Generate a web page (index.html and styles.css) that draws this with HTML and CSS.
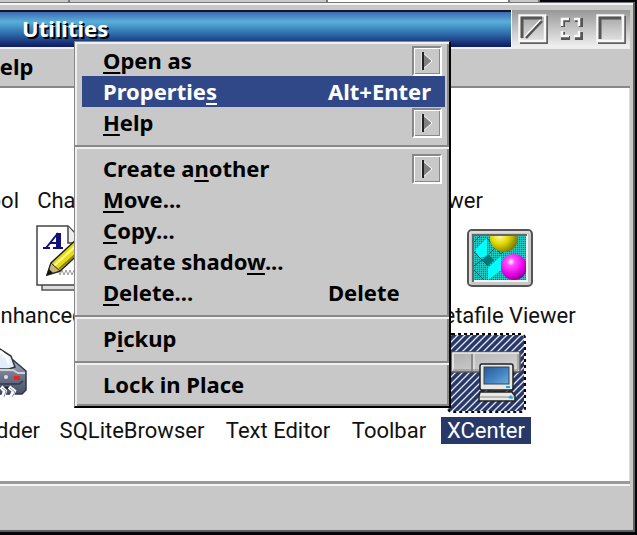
FILE: index.html
```html
<!DOCTYPE html>
<html lang="en">
<head>
    <meta charset="UTF-8">
    <meta name="viewport" content="width=device-width, initial-scale=1.0">
    <title>Utilities</title>
    <link rel="stylesheet" href="styles.css">
</head>
<body>
    <div class="desktop">
        <!-- Bottom edge of the window behind -->
        <div class="back-window">
            <span class="back-cell"></span>
            <span class="back-cell back-wide"></span>
            <span class="back-cell back-white"></span>
            <span class="back-cell back-end"></span>
        </div>

        <div class="window">
            <div class="titlebar">
                <h1 class="title">Utilities</h1>
                <div class="title-buttons">
                    <button type="button" aria-label="Close">
                        <svg width="30" height="30" viewBox="0 0 30 30" fill="none">
                            <path d="M2 29H29V2" stroke="#606060" stroke-width="2"/>
                            <path d="M1.5 1.5H27V27H1.5Z" stroke="#f8f8f8" stroke-width="2.5"/>
                            <path d="M4 24V4H24" stroke="#555" stroke-width="3"/>
                            <path d="M7 23L23 6" stroke="#fff" stroke-width="2.5"/>
                            <path d="M8 24L24 7" stroke="#505050" stroke-width="2.5"/>
                        </svg>
                    </button>
                    <button type="button" aria-label="Minimize">
                        <svg width="24" height="24" viewBox="0 0 24 24" fill="none">
                            <path d="M3 10V3H10M15 3H21V10M3 15V21H10M15 21H21V15" stroke="#555" stroke-width="4"/>
                            <path d="M2 9V2H9M14 2H19V9M2 14V19H9M14 19H19V14" stroke="#f8f8f8" stroke-width="2.5"/>
                        </svg>
                    </button>
                    <button type="button" aria-label="Maximize">
                        <svg width="30" height="30" viewBox="0 0 30 30" fill="none">
                            <path d="M2 29H29V2" stroke="#606060" stroke-width="2"/>
                            <path d="M1.5 1.5H27V27H1.5Z" stroke="#f8f8f8" stroke-width="2.5"/>
                            <path d="M4 25V4H25" stroke="#555" stroke-width="3"/>
                        </svg>
                    </button>
                </div>
            </div>

            <div class="menubar">
                <button type="button"><u>H</u>elp</button>
            </div>

            <div class="folder">
                <div class="icon-row row-tools">
                    <a href="#" class="item"><span class="label">Tool</span></a>
                    <a href="#" class="item"><span class="label">Char</span></a>
                    <a href="#" class="item"><span class="label">Viewer</span></a>
                </div>
                <div class="icon-row row-editors">
                    <a href="#" class="item">
                        <span class="icon">
                            <svg width="64" height="66" viewBox="0 0 64 66">
                                <path d="M6 8H51V65H6Z" fill="#ddd" stroke="#555" stroke-width="1.5"/>
                                <path d="M1 1H32L46 15V60H1Z" fill="#fff" stroke="#444" stroke-width="1.5"/>
                                <path d="M32 1V18H46" fill="#eee" stroke="#444" stroke-width="1.5"/>
                                <path d="M7 23H14M17 23H27M10 23L22 8M14 18H23" fill="none" stroke="#10107c" stroke-width="2"/>
                                <path d="M20 8H25V23H20Z" fill="#10107c"/>
                                <path d="M20 48l2-3 2 5 2-5 2 5 2-5 2 5 2-5 2 5 2-5 2 5 2-5" fill="none" stroke="#999"/>
                                <path d="M11 50L15 38L43 12L51 21L24 46Z" fill="#e8dc10" stroke="#222" stroke-width="1.5"/>
                                <path d="M18 41L44 17" stroke="#ffff9a" stroke-width="2"/>
                                <path d="M23 44L49 21" stroke="#8c8600" stroke-width="2"/>
                                <path d="M11 50L15 38L24 46Z" fill="#c9b47a" stroke="#222"/>
                                <path d="M11 50L13 44L17 48Z" fill="#111"/>
                            </svg>
                        </span>
                        <span class="label">Enhanced Editor</span>
                    </a>
                    <a href="#" class="item">
                        <span class="icon">
                            <svg width="66" height="58" viewBox="0 0 66 58">
                                <defs>
                                    <pattern id="dither" width="2" height="2" patternUnits="userSpaceOnUse">
                                        <rect width="2" height="2" fill="#00c4c4"/>
                                        <rect width="1" height="1" fill="#008484"/>
                                        <rect x="1" y="1" width="1" height="1" fill="#20d0c8"/>
                                    </pattern>
                                    <radialGradient id="pink" cx=".38" cy=".3" r=".75">
                                        <stop offset="0" stop-color="#fff"/>
                                        <stop offset=".2" stop-color="#ff50ff"/>
                                        <stop offset=".65" stop-color="#e800e8"/>
                                        <stop offset="1" stop-color="#800080"/>
                                    </radialGradient>
                                    <radialGradient id="yellow" cx=".35" cy=".4" r=".65">
                                        <stop offset="0" stop-color="#ffffb0"/>
                                        <stop offset=".5" stop-color="#e0d800"/>
                                        <stop offset="1" stop-color="#807c00"/>
                                    </radialGradient>
                                    <clipPath id="screen"><rect x="7" y="7" width="52" height="44"/></clipPath>
                                </defs>
                                <rect x="1" y="1" width="64" height="56" rx="4" fill="#c8c8c8" stroke="#555" stroke-width="2"/>
                                <path d="M3 55V3H63" fill="none" stroke="#eee"/>
                                <rect x="5" y="5" width="56" height="48" fill="#f4f4f4"/>
                                <path d="M6 53V6H60" fill="none" stroke="#666" stroke-width="2"/>
                                <g clip-path="url(#screen)">
                                    <rect x="7" y="7" width="52" height="44" fill="url(#dither)"/>
                                    <path d="M8 21L20 9V27L13 29Z" fill="#00ffff"/>
                                    <path d="M21 39L34 27V41L21 51Z" fill="#00ffff"/>
                                    <path d="M15 31L21 25L27 31L21 37Z" fill="#007878"/>
                                    <path d="M7 13L13 7M7 37L15 31M20 9L34 25M7 23L21 37M7 41L17 51M22 25L34 13M34 25L45 14M45 51L59 37" stroke="#066" fill="none"/>
                                    <circle cx="37" cy="9" r="14" fill="url(#yellow)"/>
                                    <circle cx="47" cy="38" r="13" fill="url(#pink)"/>
                                </g>
                            </svg>
                        </span>
                        <span class="label">Metafile Viewer</span>
                    </a>
                </div>
                <div class="icon-row row-apps">
                    <a href="#" class="item">
                        <span class="icon">
                            <svg width="62" height="50" viewBox="2 0 62 50">
                                <defs>
                                    <linearGradient id="steel" x2="0" y2="1">
                                        <stop offset="0" stop-color="#b4b8c4"/>
                                        <stop offset=".4" stop-color="#747c90"/>
                                        <stop offset="1" stop-color="#485068"/>
                                    </linearGradient>
                                </defs>
                                <path d="M3 22L14 12H50L63 23V42L59 46H5L3 42Z" fill="url(#steel)" stroke="#303648" stroke-width="1.5"/>
                                <path d="M12 18L24 1H37L48 8L52 19L46 21H14Z" fill="#e4eefa" stroke="#333" stroke-width="1.5"/>
                                <path d="M26 5L38 4L44 10L46 16" fill="none" stroke="#fff" stroke-width="3"/>
                                <path d="M10 22H50L55 25H62" fill="none" stroke="#ccd0da" stroke-width="2"/>
                                <path d="M4 36H56L60 33" fill="none" stroke="#3a4256" stroke-width="2"/>
                                <circle cx="43" cy="29" r="2" fill="#d8e0f0"/>
                                <rect x="51" y="28" width="6" height="4" fill="#f02020"/>
                                <path d="M6 40H50" fill="none" stroke="#20242e" stroke-width="3"/>
                                <path d="M38 39l4 4-2 6M46 39l5 4-3 6" fill="none" stroke="#fff" stroke-width="4"/>
                                <path d="M39 40l4 3-2 6M47 40l5 4-3 5" fill="none" stroke="#7890b8"/>
                            </svg>
                        </span>
                        <span class="label">Shredder</span>
                    </a>
                    <a href="#" class="item"><span class="icon"></span><span class="label">SQLiteBrowser</span></a>
                    <a href="#" class="item"><span class="icon"></span><span class="label">Text Editor</span></a>
                    <a href="#" class="item"><span class="icon"></span><span class="label">Toolbar</span></a>
                    <a href="#" class="item selected">
                        <span class="icon">
                            <svg width="80" height="80" viewBox="0 0 80 80">
                                <defs>
                                    <pattern id="hatch" width="7" height="7" patternUnits="userSpaceOnUse">
                                        <rect width="7" height="7" fill="#283868"/>
                                        <path d="M-1 8L8 -1M-1 1L1 -1M6 8L8 6" stroke="#e4e8f4" stroke-width="1.3"/>
                                    </pattern>
                                    <linearGradient id="glass" x2="1" y2="1">
                                        <stop offset="0" stop-color="#285890"/>
                                        <stop offset=".5" stop-color="#4080c0"/>
                                        <stop offset="1" stop-color="#70acdc"/>
                                    </linearGradient>
                                    <linearGradient id="panel" x2="1" y2="1">
                                        <stop offset="0" stop-color="#b0b0b0"/>
                                        <stop offset="1" stop-color="#d8d8d8"/>
                                    </linearGradient>
                                </defs>
                                <rect x="2" y="2" width="76" height="76" rx="4" fill="url(#hatch)"/>
                                <rect x="2" y="1" width="77" height="78" rx="4" fill="none" stroke="#000" stroke-width="2" stroke-dasharray="3 3"/>
                                <path d="M5 19H74V39H5Z" fill="url(#panel)" stroke="#555" stroke-width="1.5"/>
                                <path d="M7 38V20H73" fill="none" stroke="#eee" stroke-width="1.5"/>
                                <path d="M26 21V38" stroke="#777" stroke-width="1.5"/>
                                <path d="M28 21V38" stroke="#eee"/>
                                <path d="M72 21V37H7" fill="none" stroke="#888"/>
                                <rect x="34" y="31" width="33" height="26" rx="2" fill="#e8e8e4" stroke="#222" stroke-width="1.5"/>
                                <rect x="38" y="34" width="25" height="17" fill="url(#glass)" stroke="#345"/>
                                <path d="M46 57H57V59H46Z" fill="#333"/>
                                <path d="M34 59H66L69 63V68H33V63Z" fill="#e8e8e4" stroke="#222" stroke-width="1.5"/>
                                <path d="M34 64H68" stroke="#888"/>
                                <path d="M62 65L65 62L67 66Z" fill="#10a8e8"/>
                                <path d="M60 54H64" stroke="#10a8e8" stroke-width="2"/>
                            </svg>
                        </span>
                        <span class="label">XCenter</span>
                    </a>
                </div>
            </div>

            <div class="statusbar"></div>
        </div>

        <!-- Context menu -->
        <div class="popup" role="menu">
            <div class="group">
                <button type="button" role="menuitem"><span><u>O</u>pen as</span><span class="arrow"><svg width="12" height="20" viewBox="0 0 12 20"><path d="M1 1L11 10L1 19Z" fill="#808080" stroke="#fff"/><path d="M2 1V19" stroke="#222" stroke-width="2"/></svg></span></button>
                <button type="button" role="menuitem" class="active"><span>Propertie<u>s</u></span><kbd>Alt+Enter</kbd></button>
                <button type="button" role="menuitem"><span><u>H</u>elp</span><span class="arrow"><svg width="12" height="20" viewBox="0 0 12 20"><path d="M1 1L11 10L1 19Z" fill="#808080" stroke="#fff"/><path d="M2 1V19" stroke="#222" stroke-width="2"/></svg></span></button>
            </div>
            <div class="group">
                <button type="button" role="menuitem"><span>Create a<u>n</u>other</span><span class="arrow"><svg width="12" height="20" viewBox="0 0 12 20"><path d="M1 1L11 10L1 19Z" fill="#808080" stroke="#fff"/><path d="M2 1V19" stroke="#222" stroke-width="2"/></svg></span></button>
                <button type="button" role="menuitem"><span><u>M</u>ove...</span></button>
                <button type="button" role="menuitem"><span><u>C</u>opy...</span></button>
                <button type="button" role="menuitem"><span>Create shado<u>w</u>...</span></button>
                <button type="button" role="menuitem"><span><u>D</u>elete...</span><kbd>Delete</kbd></button>
            </div>
            <div class="group">
                <button type="button" role="menuitem"><span>P<u>i</u>ckup</span></button>
            </div>
            <div class="group">
                <button type="button" role="menuitem"><span>Lock in Place</span></button>
            </div>
        </div>
    </div>
</body>
</html>
```
FILE: styles.css
```css
* {
    box-sizing: border-box;
}
body {
    margin: 0;
    background-color: #05060c;
    font-family: "Noto Sans", sans-serif;
    font-size: 22px;
    color: #000;
}
button {
    margin: 0;
    padding: 0;
    border: none;
    background: none;
    font: inherit;
    color: inherit;
}
svg {
    display: block;
}
u {
    text-decoration-thickness: 2px;
    text-underline-offset: 3px;
    text-decoration-skip-ink: none;
}

.desktop {
    position: relative;
    display: flex;
    flex-direction: column;
    min-height: 100vh;
    padding: 0 2px 3px 0;
    overflow: hidden;
}

/* Window behind */
.back-window {
    display: flex;
    height: 2px;
}
.back-cell {
    width: 70px;
    background-color: #c8c8c8;
    border-right: 2px solid #777;
}
.back-wide {
    width: 258px;
}
.back-white {
    width: 182px;
    background-color: #fff;
}
.back-end {
    width: 30px;
}

/* Folder window, its left part lies off the screen */
.window {
    flex: 1;
    display: flex;
    flex-direction: column;
    margin-left: -60px;
    padding: 7px 3px 0 7px;
    background-color: #c8c8c8;
    border-top: 1px solid #777;
    border-right: 2px solid #606060;
    border-bottom: 2px solid #606060;
    box-shadow: inset 0 2px #f4f4f4;
}
.titlebar {
    display: flex;
    height: 39px;
}
.title {
    flex: 1;
    margin: 0;
    padding-left: 75px;
    border-top: 2px solid #101828;
    border-bottom: 2px solid #f0f0f0;
    background: linear-gradient(#4068b8, #58b0d8 28%, #3070b0 60%, #102068 96%);
    color: #fff;
    font-size: 22px;
    font-weight: 700;
    line-height: 32px;
    text-shadow: 2px 2px #000;
}
.title-buttons {
    display: flex;
    align-items: center;
    gap: 12px;
    padding: 0 4px 0 6px;
    border-left: 1px solid #fff;
    border-bottom: 2px solid #eee;
    background: linear-gradient(#989898, #f0f0f0);
}
.menubar {
    height: 39px;
    padding-left: 36px;
    border-bottom: 2px solid #888;
    font-weight: 700;
    line-height: 35px;
}

/* Folder contents */
.folder {
    flex: 1;
    padding-top: 99px;
    border-right: 1px solid #ddd;
    background-color: #fff;
    font-family: Roboto, sans-serif;
}
.icon-row {
    display: grid;
    gap: 8px;
}
.row-tools {
    grid-template-columns: 78px 56px 392px;
    justify-items: end;
}
.row-editors {
    grid-template-columns: 165px 168px;
    gap: 266px;
    padding-left: 38px;
}
.row-apps {
    grid-template-columns: 98px 158px 118px 88px 90px;
}
.item {
    display: flex;
    flex-direction: column;
    align-items: center;
    color: #111;
    text-decoration: none;
    white-space: nowrap;
}
.icon {
    display: flex;
    align-items: center;
    justify-content: center;
    height: 88px;
}
.label {
    padding: 0 6px;
    line-height: 27px;
}
.selected .label {
    background-color: #283868;
    color: #fff;
}
.statusbar {
    height: 49px;
    border-top: 3px solid #999;
    box-shadow: inset 0 2px #f4f4f4;
}

/* Context menu */
.popup {
    position: absolute;
    top: 41px;
    left: 74px;
    width: 377px;
    padding-bottom: 6px;
    background-color: #c8c8c8;
    border: 1px solid #888;
    border-right: 2px solid #000;
    border-bottom: 2px solid #000;
    box-shadow: inset 2px 2px #eee, inset -2px -2px #888;
    font-weight: 700;
}
.group {
    padding: 3px 4px 7px 7px;
    border-bottom: 2px solid #888;
    box-shadow: inset 2px 2px #f0f0f0;
}
.group + .group {
    padding-top: 6px;
}
.group:last-child {
    padding-bottom: 0;
    border-bottom: none;
}
.group button {
    display: grid;
    grid-template-columns: 1fr 117px;
    align-items: center;
    width: 100%;
    height: 31px;
    padding-left: 21px;
    line-height: 29px;
    text-align: left;
}
.group .active {
    background-color: #304888;
    color: #fff;
}
kbd {
    font: inherit;
}
.arrow {
    display: flex;
    align-items: center;
    justify-content: center;
    justify-self: end;
    width: 30px;
    height: 30px;
    margin-right: 3px;
    border: 2px solid #888;
    border-right-color: #fff;
    border-bottom-color: #fff;
    box-shadow: inset 1px 1px #fff, inset -1px -1px #888;
}
```
